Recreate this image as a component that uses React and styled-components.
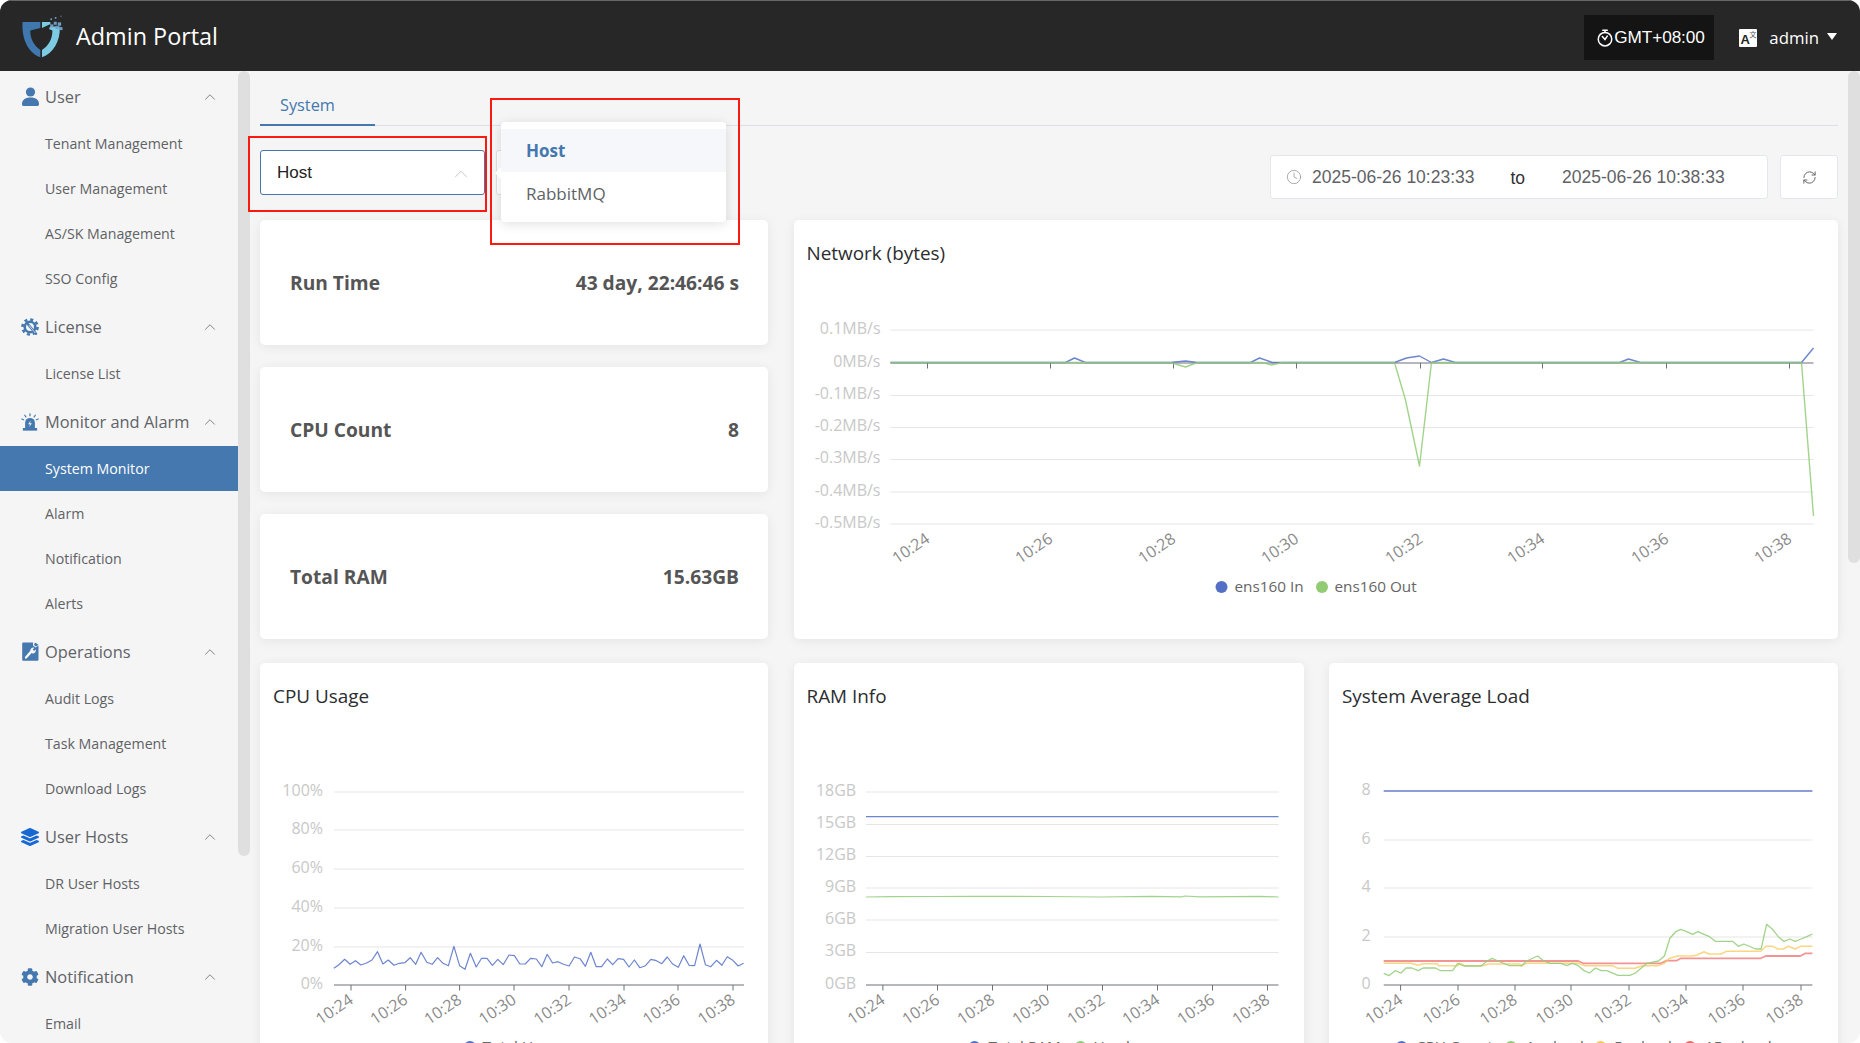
import React from "react";
import styled, { createGlobalStyle } from "styled-components";
import { ChevronUp, Clock, RefreshCw } from "lucide-react";
import { FaCog, FaLayerGroup } from "react-icons/fa";

const UI_FONT = `"Open Sans", "Noto Sans", sans-serif`;
const ARIAL = `"Liberation Sans", Arial, sans-serif`;

const GlobalStyle = createGlobalStyle`
  html, body { margin: 0; padding: 0; background: #fff; overflow: hidden; }
  * { box-sizing: border-box; }
`;

const Frame = styled.div`
  position: relative;
  width: 1860px;
  height: 1043px;
  overflow: hidden;
  border-radius: 12px;
  background: #f5f5f5;
  font-family: ${UI_FONT};
`;

const Header = styled.header`
  height: 71px;
  display: flex;
  align-items: center;
  padding: 0 23px 0 20px;
  background: #272727;
  border-top: 1px solid #666;
`;

const Brand = styled.div`
  font-size: 23.4px;
  color: #fff;
  margin-left: 12px;
  margin-top: -1px;
`;

const HeaderRight = styled.div`
  margin-left: auto;
  display: flex;
  align-items: center;
`;

const ZoneBox = styled.div`
  width: 130px;
  height: 45px;
  background: #141414;
  color: #fff;
  display: flex;
  align-items: center;
  padding-left: 12px;
  font-family: ${ARIAL};
  font-size: 17.2px;
  letter-spacing: -0.1px;
  margin-top: 3px;
`;

const UserMenu = styled.div`
  display: flex;
  align-items: center;
  margin-left: 25px;
  color: #fff;
  font-size: 16.8px;
  margin-top: 3px;
`;

const UserName = styled.span`
  margin-left: 12px;
`;

const Caret = styled.span`
  width: 0;
  height: 0;
  margin-left: 8px;
  margin-top: -2px;
  border-left: 5.5px solid transparent;
  border-right: 5.5px solid transparent;
  border-top: 7px solid #fff;
`;

const Body = styled.div`
  display: flex;
  height: 972px;
`;

const Sidebar = styled.nav`
  width: 238px;
  flex: none;
  background: #f5f5f5;
`;

const GroupRow = styled.div`
  height: 50px;
  display: flex;
  align-items: center;
  padding: 1px 19px 0 21px;
  color: #5f6368;
  font-size: 16.4px;
`;

const GroupIcon = styled.span`
  width: 18px;
  height: 18px;
  display: flex;
  align-items: center;
  justify-content: center;
  margin-right: 6px;
  flex: none;
`;

const GroupChevron = styled.span`
  margin-left: auto;
  display: flex;
  color: #777;
`;

const MenuItem = styled.div`
  height: 45px;
  display: flex;
  align-items: center;
  padding-left: 45px;
  font-size: 14.2px;
  color: ${(p) => (p.$active ? "#fff" : "#606266")};
  background: ${(p) => (p.$active ? "#4478ae" : "transparent")};
`;

const ScrollThumb = styled.div`
  width: 12px;
  flex: none;
  height: ${(p) => p.$height}px;
  background: #dfdfdf;
  border-radius: 6px;
`;

const Content = styled.main`
  flex: 1;
  min-width: 0;
  padding: 0 10px;
`;

const Tabs = styled.div`
  height: 55px;
  display: flex;
  align-items: flex-end;
  border-bottom: 1px solid #dcdfe6;
`;

const Tab = styled.div`
  width: 115px;
  height: 40px;
  margin-bottom: -1px;
  padding-left: 20px;
  font-size: 16.3px;
  line-height: 38px;
  color: #4478ae;
  border-bottom: 2px solid #4478ae;
`;

const Toolbar = styled.div`
  height: 94px;
  display: flex;
  align-items: flex-start;
  padding-top: 24px;
`;

const SelectBox = styled.div`
  width: ${(p) => p.$width}px;
  height: 45px;
  flex: none;
  background: #fff;
  border: 1px solid ${(p) => p.$border};
  border-radius: 3px;
  margin-right: 11px;
  display: flex;
  align-items: center;
  padding: 0 12px 0 16px;
  font-family: ${ARIAL};
  font-size: 17px;
  color: #222;
`;

const SelectChevron = styled.span`
  margin-left: auto;
  margin-top: 3px;
  display: flex;
  color: #bfc2c7;
`;

const DateRange = styled.div`
  width: 498px;
  height: 44px;
  margin-left: auto;
  margin-top: 5px;
  background: #fff;
  border: 1px solid #e4e7ed;
  border-radius: 3px;
  display: flex;
  align-items: center;
  padding-left: 15px;
  font-family: ${ARIAL};
  font-size: 17.5px;
  color: #606266;
`;

const DateValue = styled.span`
  margin-left: ${(p) => p.$gap}px;
`;

const DateTo = styled.span`
  margin-left: 36px;
  margin-top: 2px;
  color: #303133;
`;

const RefreshButton = styled.div`
  width: 58px;
  height: 44px;
  margin-left: 12px;
  margin-top: 5px;
  background: #fff;
  border: 1px solid #e4e7ed;
  border-radius: 3px;
  display: flex;
  align-items: center;
  justify-content: center;
  color: #666;
`;

const Grid = styled.div`
  display: grid;
  grid-template-columns: 508px 510px minmax(0, 1fr);
  column-gap: 25.5px;
  row-gap: 24px;
`;

const StatColumn = styled.div`
  display: flex;
  flex-direction: column;
  gap: 22px;
`;

const Card = styled.section`
  background: #fff;
  border-radius: 5px;
  box-shadow: 0 2px 12px rgba(0, 0, 0, 0.07);
  grid-column: span ${(p) => p.$span || 1};
`;

const StatCard = styled(Card)`
  height: 125px;
  display: flex;
  align-items: center;
  justify-content: space-between;
  padding: 0 29px 0 30px;
  font-size: 19.2px;
  font-weight: 700;
  color: #555;
`;

const ChartTitle = styled.h3`
  margin: 0;
  padding: 21px 13px 0;
  height: 45px;
  font-size: 18.9px;
  line-height: 24px;
  font-weight: 400;
  color: #2b2d30;
`;

const ChartSvg = styled.svg`
  display: block;
  width: 100%;
`;

const AxisText = styled.text`
  font-family: ${UI_FONT};
  font-size: 16px;
  fill: ${(p) => p.$fill};
`;

const LegendText = styled.text`
  font-family: ${UI_FONT};
  font-size: 15.3px;
  fill: #666;
`;

const Annotation = styled.div`
  position: absolute;
  left: ${(p) => p.$x}px;
  top: ${(p) => p.$y}px;
  width: ${(p) => p.$w}px;
  height: ${(p) => p.$h}px;
  border: 2px solid #fb1a10;
  pointer-events: none;
`;

const Dropdown = styled.div`
  position: absolute;
  left: 501px;
  top: 122px;
  width: 225px;
  height: 100px;
  padding: 7px 0;
  background: #fff;
  border-radius: 4px;
  box-shadow: 0 2px 12px rgba(0, 0, 0, 0.12);
  &::before {
    content: "";
    position: absolute;
    left: -6px;
    top: 45px;
    border-top: 6px solid transparent;
    border-bottom: 6px solid transparent;
    border-right: 6px solid #fff;
  }
`;

const Option = styled.div`
  height: 43px;
  display: flex;
  align-items: center;
  padding-left: 25px;
  font-size: 17px;
  font-weight: ${(p) => (p.$selected ? 700 : 400)};
  color: ${(p) => (p.$selected ? "#4478ae" : "#606266")};
  background: ${(p) => (p.$selected ? "#f5f7fa" : "#fff")};
`;

const BLUE = "#5470c6";
const GREEN = "#91cc75";
const YELLOW = "#fac858";
const RED = "#ee6666";
const ICON_BLUE = "#4478ae";

const Logo = () => (
  <svg width="44" height="47" viewBox="60 40 130 140">
    <path d="M67 67H120V85L90 92C90 118 102 138 120 150V172C88 160 64 125 67 67Z" fill="#3f77ae" />
    <path d="M125 172V150C144 138 156 118 156 92L146 88L152 72L125 85V67H150V80H178C180 125 158 160 125 172Z" fill="#7ccbe3" />
    <g fill="#6f9fc4">
      <rect x="160" y="66" width="9" height="9" />
      <rect x="172" y="68" width="10" height="10" />
      <rect x="150" y="74" width="9" height="9" />
      <rect x="165" y="78" width="9" height="9" />
      <rect x="177" y="82" width="9" height="9" />
      <rect x="163" y="52" width="5" height="5" />
      <rect x="150" y="56" width="5" height="5" />
      <rect x="180" y="48" width="3" height="3" />
    </g>
  </svg>
);

const UserIcon = () => (
  <svg width="17" height="19" viewBox="0 0 17 19" fill={ICON_BLUE}>
    <circle cx="8.5" cy="5" r="4.6" />
    <path d="M0 17C0 13 3 10.5 8.5 10.5S17 13 17 17C17 18.4 16.4 19 15 19H2C.6 19 0 18.4 0 17Z" />
  </svg>
);

const LicenseIcon = () => (
  <svg width="18" height="18" viewBox="0 0 24 24">
    <circle cx="12" cy="12" r="7" fill="none" stroke={ICON_BLUE} strokeWidth="3.4" />
    <circle cx="12" cy="12" r="10" fill="none" stroke={ICON_BLUE} strokeWidth="3.6" strokeDasharray="4 3.85" />
    <path d="M9 8L20 21" stroke={ICON_BLUE} strokeWidth="3.4" strokeLinecap="round" />
    <path d="M10.5 9.5L19 20" stroke="#f5f5f5" strokeWidth="1" />
  </svg>
);

const AlarmIcon = () => (
  <svg width="18" height="18" viewBox="0 0 24 24">
    <g stroke={ICON_BLUE} strokeWidth="1.6" strokeLinecap="round">
      <path d="M12 1V3.5M5 3L6.5 5.2M19 3L17.5 5.2M1 8L3.5 9M23 8L20.5 9" />
    </g>
    <path d="M5.5 20V13A6.5 6.5 0 0 1 18.5 13V20Z" fill={ICON_BLUE} />
    <rect x="2.5" y="20" width="19" height="3.5" fill={ICON_BLUE} />
    <path d="M13 10L9.5 15H12L11 18.5L14.5 13.5H12Z" fill="#f5f5f5" />
  </svg>
);

const OperationsIcon = () => (
  <svg width="17" height="19" viewBox="0 0 17 19">
    <path d="M1.5 0.5H11V3.5L13.5 5.5L16.5 3.5V17.5C16.5 18.3 16 18.8 15.2 18.8H1.5C.7 18.8 .2 18.3 .2 17.5V1.8C.2 1 .7 .5 1.5 .5Z" fill={ICON_BLUE} />
    <path d="M13 .5L16.5 2.8L14 4.4L12 3Z" fill={ICON_BLUE} />
    <path d="M4 15.5L9.2 9.6" stroke="#f5f5f5" strokeWidth="2.4" strokeLinecap="round" />
    <path d="M8.4 9.6A3 3 0 0 1 12.3 5.8L10.8 7.6L12 8.9L13.7 7.3A3 3 0 0 1 9.9 11.2Z" fill="#f5f5f5" />
  </svg>
);

const ZoneIcon = () => (
  <svg width="18" height="18" viewBox="0 0 24 24" fill="none" stroke="#fff" strokeWidth="2">
    <circle cx="12" cy="13.5" r="9" />
    <path d="M12 1.5V4.5M9 1.5H15M8.5 10L12 14L15 9.5" strokeLinecap="round" />
  </svg>
);

const LocaleIcon = () => (
  <svg width="18" height="18" viewBox="0 0 18 18">
    <rect width="18" height="18" rx="1" fill="#fff" />
    <text x="1.5" y="15" fontFamily={ARIAL} fontWeight="700" fontSize="13" fill="#272727">A</text>
    <text x="10.5" y="8" fontFamily={`"Noto Sans CJK SC", sans-serif`} fontSize="7" fill="#555">文</text>
  </svg>
);

const MENU = [
  { title: "User", icon: <UserIcon />, items: ["Tenant Management", "User Management", "AS/SK Management", "SSO Config"] },
  { title: "License", icon: <LicenseIcon />, items: ["License List"] },
  { title: "Monitor and Alarm", icon: <AlarmIcon />, items: ["System Monitor", "Alarm", "Notification", "Alerts"] },
  { title: "Operations", icon: <OperationsIcon />, items: ["Audit Logs", "Task Management", "Download Logs"] },
  { title: "User Hosts", icon: <FaLayerGroup size={18} color="#1768d2" />, items: ["DR User Hosts", "Migration User Hosts"] },
  { title: "Notification", icon: <FaCog size={18} color={ICON_BLUE} />, items: ["Email"] },
];

const TIME_LABELS = ["10:24", "10:26", "10:28", "10:30", "10:32", "10:34", "10:36", "10:38"];

// points were read off the screenshot at zoomed scale, this maps them to page px
const fromZoom = (pts, ox, oy, sx) => pts.map(([x, y]) => `${(ox + x / sx).toFixed(1)},${(oy + y / 3).toFixed(1)}`).join(" ");

const CPU_LINE = [[248,685],[262,675],[280,658],[296,673],[312,662],[328,675],[345,669],[361,660],[377,635],[393,672],[409,660],[426,676],[442,670],[458,668],[474,653],[490,673],[506,637],[523,667],[539,673],[555,653],[571,670],[587,677],[603,619],[620,677],[636,688],[652,640],[669,681],[685,655],[701,655],[717,676],[733,658],[749,674],[766,645],[782,647],[798,672],[814,672],[830,655],[847,657],[863,680],[879,643],[895,669],[911,665],[927,673],[944,678],[960,651],[976,656],[992,679],[1008,637],[1024,680],[1040,680],[1057,657],[1073,674],[1089,656],[1105,658],[1121,681],[1137,660],[1153,683],[1170,677],[1186,658],[1202,662],[1218,671],[1234,651],[1250,672],[1267,682],[1283,647],[1299,676],[1315,677],[1331,612],[1347,674],[1363,680],[1380,661],[1396,676],[1412,650],[1428,661],[1444,678],[1460,670]];

const LOAD_GREEN = [[185,700],[200,707],[218,692],[235,699],[250,684],[267,684],[285,692],[300,684],[335,684],[350,692],[385,692],[400,670],[418,678],[468,678],[485,663],[500,655],[517,663],[550,677],[585,677],[600,663],[632,648],[650,663],[668,670],[700,670],[716,677],[733,670],[750,677],[767,692],[783,699],[800,684],[817,692],[833,692],[865,706],[900,706],[916,699],[933,684],[950,670],[983,663],[1000,648],[1016,595],[1033,575],[1048,568],[1065,575],[1082,583],[1098,575],[1115,583],[1131,590],[1148,604],[1198,604],[1215,619],[1231,612],[1265,627],[1281,627],[1297,553],[1314,568],[1331,590],[1347,604],[1364,597],[1380,604],[1397,597],[1414,590],[1430,582]];
const LOAD_YELLOW = [[185,670],[265,670],[285,676],[300,671],[340,671],[345,677],[400,677],[405,670],[420,677],[470,677],[490,672],[580,672],[585,678],[600,670],[750,670],[770,677],[850,677],[865,685],[915,685],[935,677],[980,677],[1000,670],[1015,655],[1040,648],[1080,648],[1095,645],[1115,635],[1130,642],[1165,642],[1180,634],[1280,634],[1295,619],[1315,619],[1330,627],[1345,627],[1360,619],[1380,627],[1395,619],[1430,619]];
const LOAD_RED = [[185,663],[750,663],[765,670],[990,670],[1005,662],[1035,662],[1048,655],[1280,655],[1295,648],[1395,648],[1410,640],[1430,640]];

const NET_IN = "890,362.5 1065,362.5 1074,358 1085,362.5 1170,362.5 1185,361 1197,362.5 1250,362.5 1259,358 1272,362.5 1394,362.5 1406,358 1419,356 1431,362.5 1443,359 1455,362.5 1619,362.5 1628,359 1640,362.5 1801,362.5 1813,348";
const NET_OUT = "890,362.5 1170,362.5 1185,367 1197,362.5 1262,362.5 1271,365 1282,362.5 1394,362.5 1405,400 1419,466 1431,362.5 1801,362.5 1813,516";

const CHARTS = {
  network: {
    box: [793.5, 265, 1044.5, 374],
    left: 890, right: 1813, labelX: 880, axisY: 363,
    grid: [[330, "0.1MB/s"], [363, "0MB/s"], [395.5, "-0.1MB/s"], [427.5, "-0.2MB/s"], [459.5, "-0.3MB/s"], [492, "-0.4MB/s"], [524, "-0.5MB/s"]],
    labelBase: 524,
    ticks: [927, 1050, 1173, 1296, 1420, 1542, 1666, 1789],
    lines: [{ color: BLUE, points: NET_IN, width: 1.4 }, { color: GREEN, points: NET_OUT, width: 1.4 }],
    legendY: 587,
    legend: [{ cx: 1221, x: 1234, color: BLUE, text: "ens160 In" }, { cx: 1321.5, x: 1334, color: GREEN, text: "ens160 Out" }],
  },
  cpu: {
    box: [260, 708, 508, 380],
    left: 334, right: 744, labelX: 323, axisY: 985,
    grid: [[792, "100%"], [830, "80%"], [869, "60%"], [908, "40%"], [947, "20%"], [985, "0%"]],
    labelBase: 985,
    ticks: [351, 405.6, 459.6, 514, 569, 624, 678, 733],
    lines: [{ color: BLUE, points: fromZoom(CPU_LINE, 250, 740, 2.958) }],
    legendY: 1047,
    legend: [{ cx: 470, x: 482.5, color: BLUE, text: "Total Usage" }],
  },
  ram: {
    box: [793.5, 708, 510, 380],
    left: 865.5, right: 1278, labelX: 855.7, axisY: 985,
    grid: [[792, "18GB"], [824.5, "15GB"], [856.5, "12GB"], [888, "9GB"], [920, "6GB"], [952.5, "3GB"], [985, "0GB"]],
    labelBase: 985,
    ticks: [882.4, 937, 992, 1047, 1102, 1157, 1212, 1267],
    lines: [
      { color: BLUE, points: "865.5,816.7 1278,816.7" },
      { color: GREEN, points: "865.5,897 890,896.6 935,896.5 970,896.3 1047,896.5 1100,897 1150,896.4 1182,896.8 1184,896 1200,896.8 1260,896.4 1278,897" },
    ],
    legendY: 1047,
    legend: [{ cx: 974, x: 988, color: BLUE, text: "Total RAM" }, { cx: 1080, x: 1093, color: GREEN, text: "Used" }],
  },
  load: {
    box: [1329, 708, 509, 380],
    left: 1383.7, right: 1812.4, labelX: 1370.6, axisY: 985,
    grid: [[791, "8"], [840, "6"], [888, "4"], [937, "2"], [985, "0"]],
    labelBase: 985,
    ticks: [1400.6, 1458, 1515, 1571, 1629, 1686, 1743, 1801],
    lines: [
      { color: BLUE, points: "1383.7,791 1812.4,791", width: 2.2, opacity: 0.65 },
      { color: RED, points: fromZoom(LOAD_RED, 1320, 740, 2.904), width: 1.8, opacity: 0.7 },
      { color: YELLOW, points: fromZoom(LOAD_YELLOW, 1320, 740, 2.904), width: 1.5, opacity: 0.75 },
      { color: GREEN, points: fromZoom(LOAD_GREEN, 1320, 740, 2.904), width: 1.3 },
    ],
    legendY: 1047,
    legend: [
      { cx: 1401.6, x: 1416, color: BLUE, text: "CPU Count" },
      { cx: 1511, x: 1526, color: GREEN, text: "1m load" },
      { cx: 1600.6, x: 1614, color: YELLOW, text: "5m load" },
      { cx: 1690, x: 1705, color: RED, text: "15m load" },
    ],
  },
};

const Chart = ({ data }) => {
  const { box, left, right, labelX, axisY, grid, labelBase, ticks, lines, legend, legendY } = data;
  return (
    <ChartSvg viewBox={box.join(" ")}>
      {grid.map(([y, label]) => (
        <g key={label}>
          {y !== axisY && <line x1={left} x2={right} y1={y} y2={y} stroke="#e6e6e6" strokeWidth="1.2" />}
          <AxisText x={labelX} y={y + 3.5} textAnchor="end" $fill="#c8c8c8">{label}</AxisText>
        </g>
      ))}
      <line x1={left} x2={right} y1={axisY} y2={axisY} stroke="#6e7079" strokeWidth="1.2" />
      {ticks.map((x, i) => (
        <g key={x}>
          <line x1={x} x2={x} y1={axisY} y2={axisY + 5.5} stroke="#6e7079" strokeWidth="1" />
          <AxisText x={x + 1} y={labelBase + 18} textAnchor="end" transform={`rotate(-34 ${x + 1} ${labelBase + 14})`} $fill="#8a8a8a">
            {TIME_LABELS[i]}
          </AxisText>
        </g>
      ))}
      {lines.map((l) => (
        <polyline key={l.color} points={l.points} fill="none" stroke={l.color} strokeOpacity={l.opacity || 0.85} strokeWidth={l.width || 1.2} strokeLinejoin="round" />
      ))}
      {legend.map((l) => (
        <g key={l.text}>
          <circle cx={l.cx} cy={legendY} r="6" fill={l.color} />
          <LegendText x={l.x} y={legendY + 5}>{l.text}</LegendText>
        </g>
      ))}
    </ChartSvg>
  );
};

const App = () => (
  <Frame>
    <GlobalStyle />
    <Header>
      <Logo />
      <Brand>Admin Portal</Brand>
      <HeaderRight>
        <ZoneBox><ZoneIcon />GMT+08:00</ZoneBox>
        <UserMenu>
          <LocaleIcon />
          <UserName>admin</UserName>
          <Caret />
        </UserMenu>
      </HeaderRight>
    </Header>
    <Body>
      <Sidebar>
        {MENU.map((group) => (
          <div key={group.title}>
            <GroupRow>
              <GroupIcon>{group.icon}</GroupIcon>
              {group.title}
              <GroupChevron><ChevronUp size={18} strokeWidth={1.2} /></GroupChevron>
            </GroupRow>
            {group.items.map((item) => (
              <MenuItem key={item} $active={item === "System Monitor"}>{item}</MenuItem>
            ))}
          </div>
        ))}
      </Sidebar>
      <ScrollThumb $height={785} />
      <Content>
        <Tabs><Tab>System</Tab></Tabs>
        <Toolbar>
          <SelectBox $width={225} $border="#4478ae">
            Host
            <SelectChevron><ChevronUp size={22} strokeWidth={1} /></SelectChevron>
          </SelectBox>
          <SelectBox $width={205} $border="#dcdfe6" />
          <DateRange>
            <Clock size={16} strokeWidth={1.2} color="#999" />
            <DateValue $gap={10}>2025-06-26 10:23:33</DateValue>
            <DateTo>to</DateTo>
            <DateValue $gap={37}>2025-06-26 10:38:33</DateValue>
          </DateRange>
          <RefreshButton><RefreshCw size={15} strokeWidth={1.6} /></RefreshButton>
        </Toolbar>
        <Grid>
          <StatColumn>
            <StatCard><span>Run Time</span><span>43 day, 22:46:46 s</span></StatCard>
            <StatCard><span>CPU Count</span><span>8</span></StatCard>
            <StatCard><span>Total RAM</span><span>15.63GB</span></StatCard>
          </StatColumn>
          <Card $span={2}>
            <ChartTitle>Network (bytes)</ChartTitle>
            <Chart data={CHARTS.network} />
          </Card>
          <Card>
            <ChartTitle>CPU Usage</ChartTitle>
            <Chart data={CHARTS.cpu} />
          </Card>
          <Card>
            <ChartTitle>RAM Info</ChartTitle>
            <Chart data={CHARTS.ram} />
          </Card>
          <Card>
            <ChartTitle>System Average Load</ChartTitle>
            <Chart data={CHARTS.load} />
          </Card>
        </Grid>
      </Content>
      <ScrollThumb $height={492} />
    </Body>
    <Dropdown>
      <Option $selected>Host</Option>
      <Option>RabbitMQ</Option>
    </Dropdown>
    <Annotation $x={248} $y={136} $w={239} $h={76} />
    <Annotation $x={490} $y={98} $w={250} $h={147} />
  </Frame>
);

export default App;
